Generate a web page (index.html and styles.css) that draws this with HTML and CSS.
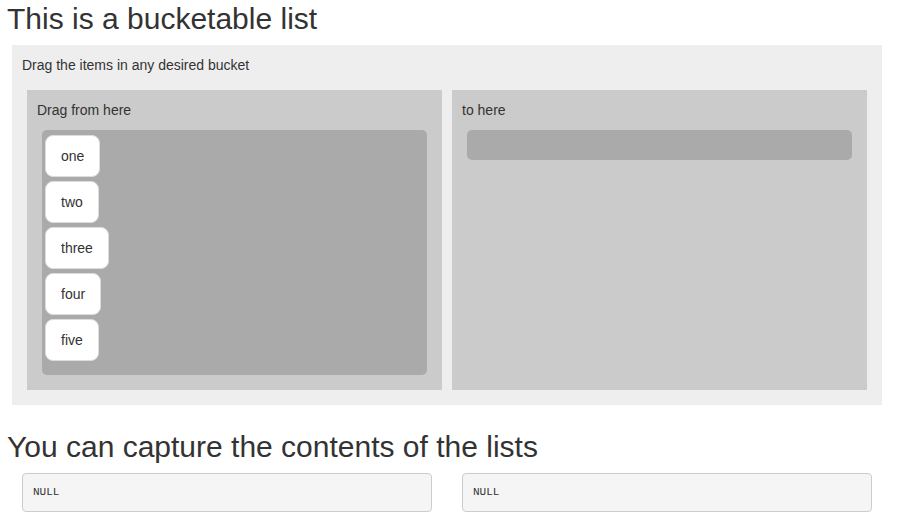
FILE: index.html
```html
<!DOCTYPE html>
<html>
<head>
<meta charset="utf-8">
<title>Bucket list</title>
<link rel="stylesheet" href="styles.css">
</head>
<body>
<div class="page">
  <h1 class="title">This is a bucketable list</h1>
  <div class="bucket">
    <div class="bucket-header">Drag the items in any desired bucket</div>
    <div class="bucket-cols">
      <div class="rank-col">
        <div class="rank-header">Drag from here</div>
        <div class="rank-list">
          <div class="rank-item">one</div>
          <div class="rank-item">two</div>
          <div class="rank-item">three</div>
          <div class="rank-item">four</div>
          <div class="rank-item">five</div>
        </div>
      </div>
      <div class="rank-col">
        <div class="rank-header">to here</div>
        <div class="rank-list rank-list-empty"></div>
      </div>
    </div>
  </div>
  <h2 class="title title-2">You can capture the contents of the lists</h2>
  <div class="out-row">
    <div class="out-col"><pre class="out">NULL</pre></div>
    <div class="out-col"><pre class="out">NULL</pre></div>
  </div>
</div>
</body>
</html>
```

FILE: styles.css
```css
html, body {
  margin: 0;
  padding: 0;
  background: #fff;
}
body {
  font-family: "Liberation Sans", Arial, Helvetica, sans-serif;
  font-size: 14px;
  line-height: 20px;
  color: #333;
}
.page {
  width: 880px;
  padding: 0 7px;
}
.title {
  font-size: 30px;
  font-weight: 400;
  line-height: 33px;
  margin: 2px 0 10px;
}
.title-2 {
  margin: 25px 0 10px;
}
.bucket {
  background: #eee;
  margin: 0 5px;
  padding: 10px;
}
.bucket-header {
  margin-bottom: 15px;
}
.bucket-cols {
  display: grid;
  grid-template-columns: 1fr 1fr;
  gap: 10px;
  padding: 0 5px 5px;
}
.rank-col {
  background: #cbcbcb;
  padding: 10px;
}
.rank-header {
  margin-bottom: 10px;
}
.rank-list {
  background: #aaa;
  border-radius: 5px;
  margin: 0 5px 5px;
  padding: 5px 3px 14px;
  display: flex;
  flex-direction: column;
  align-items: flex-start;
  gap: 4px;
}
.rank-list-empty {
  padding: 0;
  height: 30px;
}
.rank-item {
  background: #fff;
  border: 1px solid #ddd;
  border-radius: 8px;
  padding: 10px 15px;
}
.out-row {
  display: grid;
  grid-template-columns: 1fr 1fr;
}
.out-col {
  padding: 0 15px;
}
.out {
  margin: 0;
  background: #f5f5f5;
  border: 1px solid #ccc;
  border-radius: 4px;
  padding: 9px 10px;
  font-family: "Liberation Mono", "DejaVu Sans Mono", monospace;
  font-size: 11px;
  line-height: 19px;
  color: #333;
}
```
